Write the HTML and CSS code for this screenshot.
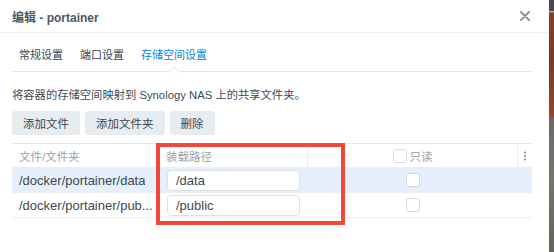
FILE: index.html
```html
<!DOCTYPE html>
<html lang="zh-CN">
<head>
<meta charset="utf-8">
<link rel="stylesheet" href="styles.css">
</head>
<body>
<div class="screen">
  <div class="dialog">
    <div class="header">
      <span class="title">编辑 - portainer</span>
      <span class="close">
        <svg width="10" height="10" viewBox="0 0 10 10"><path d="M1 1L9 9M9 1L1 9" stroke="#8e949a" stroke-width="2" stroke-linecap="round"/></svg>
      </span>
    </div>
    <div class="content">
      <div class="tabs">
        <div class="tab">常规设置</div>
        <div class="tab">端口设置</div>
        <div class="tab active">存储空间设置</div>
      </div>
      <p class="desc">将容器的存储空间映射到 Synology NAS 上的共享文件夹。</p>
      <div class="toolbar">
        <button class="btn">添加文件</button>
        <button class="btn">添加文件夹</button>
        <button class="btn">删除</button>
      </div>
      <div class="table">
        <div class="row head">
          <div class="cell c1">文件/文件夹</div>
          <div class="cell c2">装载路径</div>
          <div class="cell c3"><span class="cb"></span><span>只读</span></div>
          <div class="cell c4">
            <svg width="4" height="10" viewBox="0 0 4 10"><circle cx="2" cy="1.5" r="1.1" fill="#8b939b"/><circle cx="2" cy="5" r="1.1" fill="#8b939b"/><circle cx="2" cy="8.5" r="1.1" fill="#8b939b"/></svg>
          </div>
        </div>
        <div class="row body selected">
          <div class="cell c1"><span class="path">/docker/portainer/data</span></div>
          <div class="cell c2"><div class="input">/data</div></div>
          <div class="cell c3"><span class="cb"></span></div>
          <div class="cell c4"></div>
        </div>
        <div class="row body">
          <div class="cell c1"><span class="path" title="/docker/portainer/public">/docker/portainer/pub...</span></div>
          <div class="cell c2"><div class="input">/public</div></div>
          <div class="cell c3"><span class="cb"></span></div>
          <div class="cell c4"></div>
        </div>
      </div>
    </div>
    <div class="annot"></div>
  </div>
  <div class="desk"></div>
</div>
</body>
</html>
```

FILE: styles.css
```css
* { box-sizing: border-box; }
html, body { margin: 0; padding: 0; }
body {
  width: 554px;
  height: 252px;
  overflow: hidden;
  background: #fff;
  font-family: "Liberation Sans", "Noto Sans CJK SC", sans-serif;
  color: #3f4852;
}
.screen {
  display: flex;
  width: 554px;
  height: 252px;
}
.dialog {
  position: relative;
  width: 549px;
  height: 252px;
  background: #fff;
}
.desk {
  width: 5px;
  height: 252px;
  background: linear-gradient(180deg, #4a4a4c 0, #4a4a4c 11px, #a9a9a9 11px, #a9a9a9 12px, #8c3f22 13px, #7a3a26 60px, #8e4a2e 116px, #6e6a68 119px, #77736f 180px, #65625f 252px);
}
.header {
  height: 33px;
  padding: 0 19px 0 12px;
  display: flex;
  align-items: center;
  justify-content: space-between;
  border-bottom: 1px solid #eceef1;
}
.title {
  font-size: 12px;
  font-weight: bold;
  color: #4f5760;
}
.close {
  display: flex;
  width: 10px;
  height: 10px;
}
.content {
  padding: 0 17px 0 12px;
}
.tabs {
  display: flex;
  gap: 3px;
  height: 39px;
  border-bottom: 1px solid #e3e6ea;
}
.tab {
  position: relative;
  padding: 14px 7px 8px;
  font-size: 11px;
  line-height: 16px;
  color: #3b444d;
}
.tab.active {
  color: #0a86e6;
}
.tab.active::after {
  content: "";
  position: absolute;
  left: 50%;
  bottom: -5px;
  width: 7px;
  height: 7px;
  margin-left: -4px;
  background: #fff;
  border-left: 1px solid #e3e6ea;
  border-top: 1px solid #e3e6ea;
  transform: rotate(45deg);
}
.desc {
  margin: 15px 0 0;
  font-size: 11.3px;
  line-height: 16px;
  color: #414a54;
}
.toolbar {
  display: flex;
  gap: 5px;
  margin-top: 8px;
}
.btn {
  height: 24px;
  padding: 0 11px;
  border: none;
  border-radius: 3px;
  background: #e7ecf1;
  font-family: inherit;
  font-size: 11.5px;
  color: #3c4650;
}
.table {
  margin-top: 8px;
  border-top: 1px solid #e6e9ed;
}
.row {
  display: grid;
  grid-template-columns: 145px 151px 210px 14px;
  height: 24px;
  border-bottom: 1px solid #eceff2;
}
.row.head {
  height: 24px;
}
.row.body {
  height: 25px;
}
.row.selected {
  background: #e5f0fc;
}
.cell {
  display: flex;
  align-items: center;
  min-width: 0;
}
.head .cell {
  font-size: 11.5px;
  color: #9aa2ab;
  border-right: 1px solid #eceef1;
}
.head .cell.c4 {
  border-right: none;
  justify-content: center;
}
.c1 {
  padding: 0 7px;
}
.body .c1 {
  padding: 0 2px 0 7px;
}
.c2 {
  padding: 0 8px 0 10px;
}
.head .c2 {
  padding-left: 9px;
}
.c3 {
  justify-content: center;
  gap: 3px;
}
.path {
  font-size: 13px;
  color: #3f4750;
  white-space: nowrap;
  overflow: hidden;
}
.input {
  width: 133px;
  height: 21px;
  padding: 0 8px;
  display: flex;
  align-items: center;
  background: #fff;
  border: 1px solid #dbe1e8;
  border-radius: 4px;
  font-size: 13px;
  color: #3f4750;
}
.cb {
  display: inline-block;
  width: 14px;
  height: 14px;
  border: 1px solid #d3d9e0;
  border-radius: 3px;
  background: #fff;
}
.annot {
  position: absolute;
  left: 156px;
  top: 143px;
  width: 189px;
  height: 82px;
  border: 4px solid #f2473a;
  pointer-events: none;
}
```
